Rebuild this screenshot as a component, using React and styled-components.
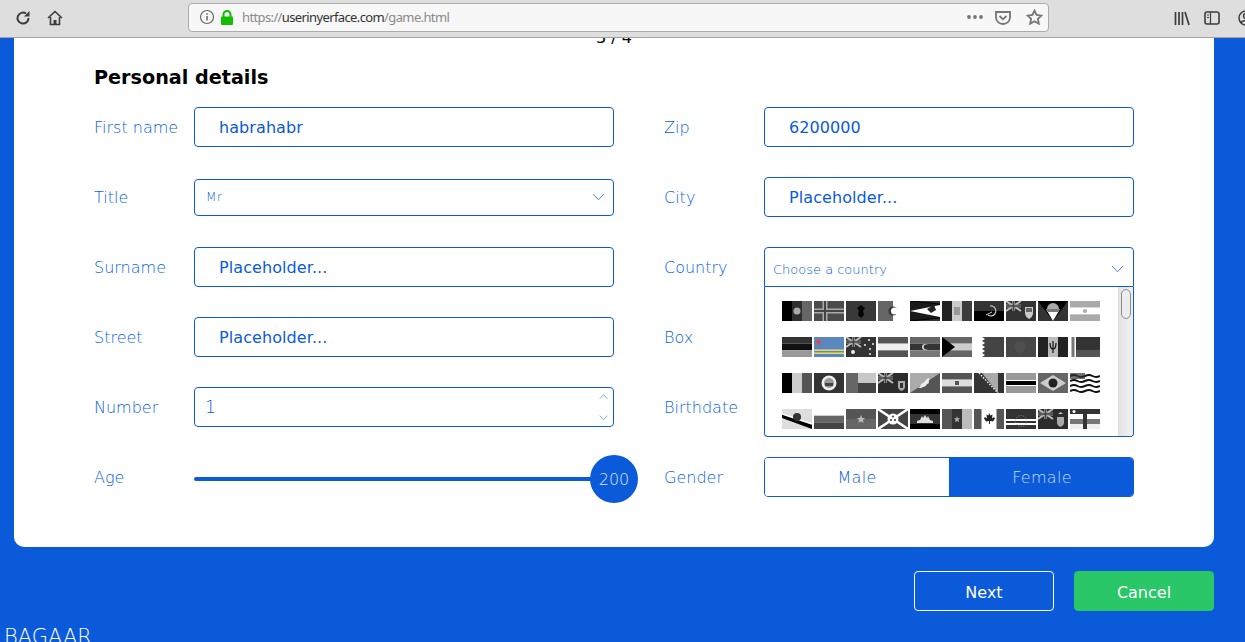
import React from 'react';
import styled, { createGlobalStyle } from 'styled-components';

const Global = createGlobalStyle`
  html, body {
    margin: 0;
    height: 642px;
    overflow: hidden;
    background: #0b5ada;
    font-family: "DejaVu Sans", sans-serif;
  }
  * { box-sizing: border-box; }
`;

/* browser chrome */
const Chrome = styled.div`
  height: 38px;
  background: #dedede;
  border-bottom: 1px solid #a3a3a3;
  display: flex;
  align-items: center;
  overflow: hidden;
  color: #3d3d3d;
`;
const NavIcons = styled.div`
  width: 188px;
  flex-shrink: 0;
  padding: 0 0 2px 15px;
  display: flex;
  gap: 16px;
`;
const UrlBar = styled.div`
  width: 861px;
  height: 29px;
  flex-shrink: 0;
  margin-top: -3px;
  padding: 0 5px 0 10px;
  background: #f7f7f7;
  border: 1px solid #ababab;
  border-radius: 4px;
  display: flex;
  align-items: center;
  font-family: "Noto Sans", sans-serif;
  font-size: 13px;
  letter-spacing: -0.62px;
  color: #8a8a8a;
`;
const Url = styled.span`
  margin-left: 8px;
  flex: 1;
  b { font-weight: 400; color: #333; }
`;
const UrlTools = styled.div`
  display: flex;
  align-items: center;
  gap: 11px;
  color: #757575;
`;
const LibraryIcons = styled.div`
  margin-left: 125px;
  display: flex;
  align-items: center;
  gap: 14px;
  margin-top: -2px;
  flex-shrink: 0;
  svg { flex-shrink: 0; }
  svg:last-child { margin-left: 4px; }
`;

/* page */
const Page = styled.div`
  height: 604px;
  overflow: hidden;
`;
const Card = styled.div`
  width: 1200px;
  margin-left: 14px;
  padding: 0 80px 50px;
  background: #fff;
  border-radius: 0 0 10px 10px;
`;
const Counter = styled.div`
  margin-top: -10px;
  height: 20px;
  font-size: 16px;
  line-height: 20px;
  text-align: center;
  color: #000;
`;
const Heading = styled.h2`
  margin: 18px 0 17px;
  font-size: 19.2px;
  line-height: 24px;
  font-weight: 700;
  color: #000;
`;
const Form = styled.div`
  display: grid;
  grid-template-columns: 520px 470px;
  column-gap: 50px;
`;
const Column = styled.div`
  display: flex;
  flex-direction: column;
  gap: 30px;
`;
const Row = styled.div`
  position: relative;
  height: 40px;
  display: flex;
  align-items: center;
`;
const Label = styled.label`
  width: 100px;
  flex-shrink: 0;
  font-size: 16px;
  font-weight: 200;
  color: #0a62e4;
`;
const Field = styled.div`
  flex: 1;
  height: 40px;
  padding-left: 24px;
  border: 1px solid #0b5ada;
  border-radius: 4px;
  display: flex;
  align-items: center;
  font-size: 16px;
  letter-spacing: 0.08px;
  color: #0b5ada;
`;
const SelectBox = styled(Field)`
  height: 37px;
  padding: 0 8px 0 11px;
  justify-content: space-between;
  font-size: 12px;
  font-weight: 200;
  letter-spacing: 0.6px;
  color: #0b5ada;
`;
const NumberBox = styled(Field)`
  position: relative;
  padding-left: 10px;
  font-size: 17px;
  font-weight: 200;
  color: #0b5ada;
`;
const Spinner = styled.div`
  position: absolute;
  right: 5px;
  top: 6px;
  bottom: 6px;
  display: flex;
  flex-direction: column;
  justify-content: space-between;
`;
const CountryBox = styled(Field)`
  padding: 4px 9px 0 8px;
  justify-content: space-between;
  font-size: 13px;
  font-weight: 200;
  letter-spacing: 0;
  color: #0b5ada;
  border-radius: 4px 4px 0 0;
`;
const CountryList = styled.div`
  position: absolute;
  z-index: 2;
  left: 100px;
  top: 40px;
  width: 370px;
  height: 150px;
  background: #fff;
  border: 1px solid #0b5ada;
  border-top: 0;
  border-radius: 0 0 4px 4px;
  overflow: hidden;
`;
const FlagGrid = styled.div`
  padding: 14px 0 0 17px;
  display: grid;
  grid-template-columns: repeat(10, 30px);
  column-gap: 2px;
  row-gap: 16px;
`;
const ScrollTrack = styled.div`
  position: absolute;
  top: 0;
  right: 0;
  bottom: 0;
  width: 15px;
  padding: 2px 0 0 2px;
  background: linear-gradient(90deg, #e4e4e4, #f2f2f2);
  border-left: 1px solid #dcdcdc;
`;
const ScrollThumb = styled.div`
  width: 10px;
  height: 30px;
  background: #ececec;
  border: 1px solid #8e8e8e;
  border-radius: 5px;
`;
const Slider = styled.div`
  position: relative;
  flex: 1;
  height: 4px;
  margin-top: 4px;
  background: #0b5ada;
  border-radius: 2px;
`;
const Thumb = styled.div`
  position: absolute;
  right: -24px;
  top: -22px;
  width: 48px;
  height: 48px;
  border-radius: 50%;
  background: #0b5ada;
  display: flex;
  align-items: center;
  justify-content: center;
  font-size: 16px;
  font-weight: 200;
  color: #d6e6ff;
`;
const Toggle = styled.div`
  flex: 1;
  height: 40px;
  display: grid;
  grid-template-columns: 1fr 1fr;
  border: 1px solid #0b5ada;
  border-radius: 4px;
  overflow: hidden;
`;
const ToggleOption = styled.div`
  display: flex;
  align-items: center;
  justify-content: center;
  padding-left: ${(p) => (p.$active ? '2px' : '0')};
  font-size: 16px;
  font-weight: 200;
  letter-spacing: 0.3px;
  color: ${(p) => (p.$active ? '#c4dcff' : '#0b5ada')};
  background: ${(p) => (p.$active ? '#0b5ada' : '#fff')};
`;
const Actions = styled.div`
  margin-top: 24px;
  padding-right: 31px;
  display: flex;
  justify-content: flex-end;
  gap: 20px;
`;
const Button = styled.button`
  width: 140px;
  height: 40px;
  padding: 2px 0 0;
  font: 400 16px "DejaVu Sans", sans-serif;
  color: #fff;
  background: ${(p) => (p.$green ? '#2ac769' : 'transparent')};
  border: 1px solid ${(p) => (p.$green ? '#2ac769' : '#fff')};
  border-radius: 4px;
`;
const Logo = styled.div`
  margin: 13px 0 0 4px;
  font-size: 21px;
  line-height: 26px;
  font-weight: 200;
  color: #fff;
`;

const Chevron = ({ size = 13, up }) => (
  <svg width={size} height={size * 0.6} viewBox="0 0 13 8" fill="none" stroke="#3f80f0" strokeWidth="1">
    <path d={up ? 'M1 7l5.5-6L12 7' : 'M1 1l5.5 6L12 1'} />
  </svg>
);

const Ico = ({ w = 16, h = 16, children, ...rest }) => (
  <svg width={w} height={h} viewBox={`0 0 ${w} ${h}`} fill="none" stroke="currentColor" strokeWidth="2" {...rest}>
    {children}
  </svg>
);

/* flag helpers */
const V = ({ c }) => c.map((f, i) => (
  <rect key={i} x={(30 / c.length) * i} y="0" width={30 / c.length} height="20" fill={f} />
));
const H = ({ c }) => c.map((f, i) => (
  <rect key={i} x="0" y={(20 / c.length) * i} width="30" height={20 / c.length} fill={f} />
));
const Jack = () => (
  <g>
    <rect width="15" height="10" fill="#2c2c2c" />
    <path d="M0 0l15 10M15 0L0 10" stroke="#bbb" strokeWidth="2" />
    <path d="M7.5 0v10M0 5h15" stroke="#999" strokeWidth="3" />
    <path d="M7.5 0v10M0 5h15" stroke="#444" strokeWidth="1.4" />
  </g>
);
const Bg = ({ c }) => <rect width="30" height="20" fill={c} />;

const FLAGS = [
  <><V c={['#000', '#2e2e2e', '#666']} /><circle cx="15" cy="10" r="3.5" fill="#aaa" /></>,
  <><Bg c="#4b4b4b" /><path d="M0 10h30M11 0v20" stroke="#aaa" strokeWidth="5" /><path d="M0 10h30M11 0v20" stroke="#444" strokeWidth="2" /></>,
  <><Bg c="#393939" /><path d="M15 4l4 3-2 3 1 4-3 3-3-3 1-4-2-3z" fill="#050505" /></>,
  <><rect width="15" height="20" fill="#666" /><rect x="15" width="15" height="20" fill="#fff" /><circle cx="15" cy="10" r="4.5" fill="#333" /><circle cx="16.5" cy="10" r="3.6" fill="#fff" /></>,
  <><Bg c="#333" /><path d="M0 0l30 3v14L0 20l0 0z" fill="#1a1a1a" /><path d="M30 4v12L0 10z" fill="#fff" /><path d="M0 0l30 3M0 20l30-3" stroke="#000" /><path d="M24 4l-7 4 4 4 5-3z" fill="#222" /></>,
  <><V c={['#222', '#ccc', '#3b3b3b']} /><rect x="12" y="6" width="6" height="8" fill="#999" /></>,
  <><H c={['#333', '#000']} /><path d="M14 14a5 5 0 1 0 2-9" stroke="#ccc" strokeWidth="1.2" fill="none" /><path d="M12 14l6-3" stroke="#ccc" /></>,
  <><Bg c="#333" /><Jack /><path d="M19 6h8v6c0 3-2 5-4 6-2-1-4-3-4-6z" fill="#ccc" /><rect x="20" y="7" width="6" height="4" fill="#666" /></>,
  <><Bg c="#000" /><path d="M0 0v20h15zM30 0v20H15z" fill="#333" /><path d="M8 8h14l-7 12z" fill="#fff" /><path d="M8 8h14l-2 3H10z" fill="#777" /><path d="M9 8a6 6 0 0 1 12 0z" fill="#aaa" /></>,
  <><H c={['#aaa', '#fff', '#aaa']} /><circle cx="15" cy="10" r="2" fill="#aaa" /></>,

  <H c={['#333', '#111', '#999']} />,
  <><Bg c="#5b87c0" /><rect y="12.5" width="30" height="1.4" fill="#ffe34d" /><rect y="15.5" width="30" height="1.4" fill="#ffe34d" /><path d="M4.5 1l1 3 3 1-3 1-1 3-1-3-3-1 3-1z" fill="#f0403c" /></>,
  <><Bg c="#333" /><Jack /><g fill="#eee"><circle cx="7" cy="15" r="2" /><circle cx="23" cy="3" r="1" /><circle cx="19" cy="8" r="1" /><circle cx="27" cy="7" r="1" /><circle cx="24" cy="12" r="1" /><circle cx="24" cy="17" r="1" /></g></>,
  <H c={['#555', '#f0f0f0', '#555']} />,
  <><H c={['#666', '#333', '#777']} /><circle cx="15" cy="10" r="3" fill="#ddd" /><circle cx="16" cy="10" r="2.4" fill="#333" /></>,
  <><H c={['#666', '#ccc', '#666']} /><path d="M0 0l13 10L0 20z" fill="#000" /></>,
  <><Bg c="#444" /><path d="M0 0h8l3 2-3 2 3 2-3 2 3 2-3 2 3 2-3 2 3 2-3 2H0z" fill="#fff" /></>,
  <><Bg c="#474747" /><circle cx="14" cy="10" r="6" fill="#4e4e4e" /></>,
  <><V c={['#222', '#bbb', '#222']} /><path d="M15 4v12M12 6c0 4 1 6 3 6s3-2 3-6" stroke="#111" strokeWidth="1.2" fill="none" /></>,
  <><Bg c="#333" /><rect width="6" height="20" fill="#fff" /><rect x="1.5" width="3" height="20" fill="#777" /><rect x="6" y="13" width="24" height="7" fill="#555" /></>,

  <V c={['#000', '#ccc', '#555']} />,
  <><Bg c="#333" /><circle cx="15" cy="10" r="7.5" fill="#eee" /><circle cx="15" cy="10" r="5" fill="#999" /><rect x="11" y="10" width="8" height="3" fill="#444" /></>,
  <><rect width="12" height="20" fill="#666" /><rect x="12" width="18" height="10" fill="#c8c8c8" /><rect x="12" y="10" width="18" height="10" fill="#444" /></>,
  <><Bg c="#2c2c2c" /><Jack /><path d="M20 8h7v6c0 2-2 3-3.500 4-1.500-1-3.500-2-3.500-4z" fill="#aaa" /><rect x="22" y="10" width="3" height="5" fill="#333" /></>,
  <><Bg c="#555" /><path d="M0 20L30 0H0z" fill="#aaa" /><path d="M8 15c3-1 2-4 5-5s2-4 6-5c1 2-1 3 0 5-3 1-3 4-6 4-1 1-3 1-5 1z" fill="#eee" /></>,
  <><H c={['#555', '#ddd', '#555']} /><path d="M13 8h4v4h-4z" fill="#555" /></>,
  <><Bg c="#333" /><path d="M8 0h16v20z" fill="#aaa" /><path d="M5 0l19 20" stroke="#fff" strokeWidth="1.4" strokeDasharray="1.500 1.500" /></>,
  <><Bg c="#999" /><rect y="7" width="30" height="6" fill="#fff" /><rect y="8" width="30" height="4" fill="#000" /></>,
  <><Bg c="#666" /><path d="M15 2l13 8-13 8L2 10z" fill="#ccc" /><circle cx="15" cy="10" r="4.5" fill="#222" /></>,
  <><Bg c="#fff" /><path d="M0 3q4-2 7.500 0t7.500 0 7.500 0 7.500 0M0 8q4-2 7.500 0t7.500 0 7.500 0 7.500 0M0 13q4-2 7.500 0t7.500 0 7.500 0 7.500 0M0 18q4-2 7.500 0t7.500 0 7.500 0 7.500 0" stroke="#111" strokeWidth="2" fill="none" /><rect width="15" height="6" fill="#333" opacity=".7" /></>,

  <><Bg c="#ddd" /><path d="M0 5l30 10v5L0 9z" fill="#000" /><path d="M0 5l30 10" stroke="#fff" strokeWidth="1.500" /><circle cx="15" cy="8" r="4" fill="#333" /></>,
  <H c={['#fff', '#666', '#444']} />,
  <><H c={['#555', '#666']} /><path d="M15 6l1.200 3h3l-2.400 2 1 3-2.800-1.800L12.200 14l1-3-2.400-2h3z" fill="#bbb" /></>,
  <><Bg c="#444" /><path d="M0 0l30 20M30 0L0 20" stroke="#fff" strokeWidth="2.500" /><circle cx="15" cy="10" r="5.500" fill="#fff" /><g fill="#333"><circle cx="15" cy="7.500" r="1" /><circle cx="13" cy="11" r="1" /><circle cx="17" cy="11" r="1" /></g></>,
  <><H c={['#000', '#333', '#333', '#000']} /><path d="M7 14h16v-2l-3-1-2-4-1 2-2-3-2 3-1-2-2 4-3 1z" fill="#ddd" /></>,
  <><V c={['#555', '#333', '#bbb']} /><path d="M15 7l.9 2.300h2.400l-1.900 1.500.7 2.500-2.100-1.400-2.100 1.400.7-2.500-1.900-1.500h2.400z" fill="#aaa" /></>,
  <><rect width="30" height="20" fill="#fff" /><rect width="7.500" height="20" fill="#555" /><rect x="22.500" width="7.500" height="20" fill="#555" /><path d="M15 4l1.500 2.500 2-1-.5 4 2-1.500 1 1.500-2 3-3-.5v3h-1v-3l-3 .5-2-3 1-1.500 2 1.500-.5-4 2 1z" fill="#222" /></>,
  <><Bg c="#333" /><rect y="10" width="30" height="6" fill="#fff" /><rect y="12" width="30" height="2" fill="#333" /><circle cx="15" cy="12" r="5.500" fill="none" stroke="#aaa" strokeWidth=".8" strokeDasharray="1 1.500" /></>,
  <><Bg c="#2c2c2c" /><Jack /><path d="M19 8h7v6c0 2-2 3-3.500 4-1.500-1-3.500-2-3.500-4z" fill="#aaa" /><path d="M20 5l2.500-2 2.500 2z" fill="#ccc" /></>,
  <><H c={['#333', '#fff', '#777', '#f0f0f0']} /><rect x="13" width="4" height="20" fill="#333" /><circle cx="4" cy="2.500" r="1.500" fill="#fff" /></>,
];

const Flag = ({ children }) => (
  <svg width="30" height="20" viewBox="0 0 30 20">{children}</svg>
);

const App = () => (
  <>
    <Global />
    <Chrome>
      <NavIcons>
        <Ico w={16} h={16}><path d="M13.500 8A5.500 5.500 0 1 1 11 3.500" /><path d="M14.500 1v5.500H9" fill="currentColor" strokeWidth="0" /></Ico>
        <Ico w={16} h={16} strokeWidth="1.600"><path d="M1 8l7-6.500L15 8M3.500 7v7.500h9V7" /><rect x="6.500" y="10" width="3" height="4.500" fill="currentColor" stroke="none" /></Ico>
      </NavIcons>
      <UrlBar>
        <Ico w={16} h={16} strokeWidth="1.200" style={{ color: '#666' }}><circle cx="8" cy="8" r="6.500" /><path d="M8 7v4.500M8 4.200v1.500" strokeWidth="1.500" /></Ico>
        <svg width="14" height="15" viewBox="0 0 14 15" style={{ marginLeft: 5 }}>
          <path d="M3.500 7V4.500a3.500 3.500 0 0 1 7 0V7" fill="none" stroke="#12bc00" strokeWidth="2" />
          <rect x="1" y="6.500" width="12" height="8.500" rx="1" fill="#12bc00" />
        </svg>
        <Url>https://<b>userinyerface.com</b>/game.html</Url>
        <UrlTools>
          <Ico w={18} h={6} strokeWidth="0"><g fill="currentColor"><circle cx="3" cy="3" r="1.900" /><circle cx="9" cy="3" r="1.900" /><circle cx="15" cy="3" r="1.900" /></g></Ico>
          <Ico w={16} h={15} strokeWidth="1.800"><path d="M1 2h14v5.500a7 6.500 0 0 1-14 0z" /><path d="M4.500 6L8 9.300 11.500 6" /></Ico>
          <Ico w={17} h={16} strokeWidth="1.800" style={{ marginLeft: 4 }}><path d="M8.500 1.600l2.100 4.400 4.800.6-3.500 3.300.9 4.800-4.300-2.400-4.300 2.400.9-4.800-3.500-3.300 4.800-.6z" /></Ico>
        </UrlTools>
      </UrlBar>
      <LibraryIcons>
        <Ico w={16} h={16} strokeWidth="1.700"><path d="M1.500 2v13M5 2v13M8.500 2v13M11 2l4 13" /></Ico>
        <Ico w={16} h={14} strokeWidth="1.600"><rect x="1" y="1" width="14" height="12" rx="2" /><path d="M6.500 1v12M3 4h2M3 6.500h2" strokeWidth="1.200" /></Ico>
        <Ico w={16} h={16} strokeWidth="1.500"><circle cx="8" cy="8" r="7" /><circle cx="8" cy="6" r="2.500" /><path d="M3 13c1-3 9-3 10 0" /></Ico>
      </LibraryIcons>
    </Chrome>
    <Page>
      <Card>
        <Counter>3 / 4</Counter>
        <Heading>Personal details</Heading>
        <Form>
          <Column>
            <Row><Label>First name</Label><Field>habrahabr</Field></Row>
            <Row><Label>Title</Label><SelectBox>Mr<Chevron /></SelectBox></Row>
            <Row><Label>Surname</Label><Field>Placeholder...</Field></Row>
            <Row><Label>Street</Label><Field>Placeholder...</Field></Row>
            <Row>
              <Label>Number</Label>
              <NumberBox>
                1
                <Spinner><Chevron size={9} up /><Chevron size={9} /></Spinner>
              </NumberBox>
            </Row>
            <Row>
              <Label>Age</Label>
              <Slider><Thumb>200</Thumb></Slider>
            </Row>
          </Column>
          <Column>
            <Row><Label>Zip</Label><Field>6200000</Field></Row>
            <Row><Label>City</Label><Field>Placeholder...</Field></Row>
            <Row>
              <Label>Country</Label>
              <CountryBox>Choose a country<Chevron /></CountryBox>
              <CountryList>
                <FlagGrid>
                  {FLAGS.map((f, i) => <Flag key={i}>{f}</Flag>)}
                </FlagGrid>
                <ScrollTrack><ScrollThumb /></ScrollTrack>
              </CountryList>
            </Row>
            <Row><Label>Box</Label></Row>
            <Row><Label>Birthdate</Label></Row>
            <Row>
              <Label>Gender</Label>
              <Toggle>
                <ToggleOption>Male</ToggleOption>
                <ToggleOption $active>Female</ToggleOption>
              </Toggle>
            </Row>
          </Column>
        </Form>
      </Card>
      <Actions>
        <Button>Next</Button>
        <Button $green>Cancel</Button>
      </Actions>
      <Logo>BAGAAR</Logo>
    </Page>
  </>
);

export default App;
